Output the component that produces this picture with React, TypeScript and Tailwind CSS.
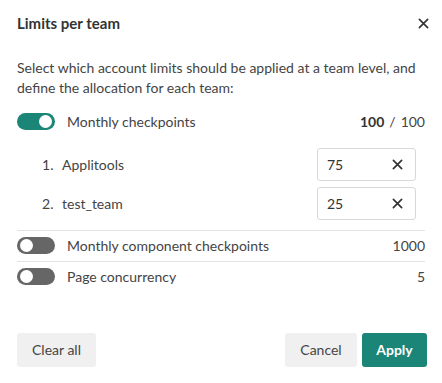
import React from 'react';

const font = { fontFamily: '"Source Sans Pro", Lato, "Open Sans", sans-serif' };

const Toggle: React.FC<{ on?: boolean }> = ({ on }) => (
  <div
    className={`relative h-[17px] w-[38px] shrink-0 rounded-full ${on ? 'bg-[#1b8578]' : 'bg-[#666666]'}`}
  >
    <div
      className={`absolute top-[2px] h-[13px] w-[13px] rounded-full bg-white ${on ? 'right-[3px]' : 'left-[3px]'}`}
    />
  </div>
);

const XIcon: React.FC<{ size?: number }> = ({ size = 12 }) => (
  <svg width={size} height={size} viewBox="0 0 12 12" fill="none">
    <path d="M1.5 1.5L10.5 10.5M10.5 1.5L1.5 10.5" stroke="#333" strokeWidth="1.8" strokeLinecap="round" />
  </svg>
);

const teams = [
  { name: 'Applitools', value: '75' },
  { name: 'test_team', value: '25' },
];

export default function App() {
  return (
    <div className="h-[383px] w-[442px] bg-white text-[14px] text-[#444]" style={font}>
      <div className="flex items-center justify-between pl-[17px] pr-[13px] pt-[12px]">
        <h2 className="font-['Lato'] text-[15px] font-bold text-[#333]">Limits per team</h2>
        <XIcon size={11} />
      </div>

      <p className="mt-[23px] px-[17px] font-['Lato'] leading-[20px]">
        Select which account limits should be applied at a team level, and define the allocation for each team:
      </p>

      <div className="mt-[15px] px-[17px] font-['Lato']">
        <div className="flex h-[18px] items-center">
          <Toggle on />
          <span className="ml-[12px] flex-1">Monthly checkpoints</span>
          <span>
            <span className="font-bold text-[#333]">100</span>
            <span className="mx-[5px]">/</span>100
          </span>
        </div>

        <div className="mt-[17px] flex flex-col gap-[6px] pl-[25px] pr-[9px]">
          {teams.map((t, i) => (
            <div key={t.name} className="flex items-center">
              <span className="w-[20px]">{i + 1}.</span>
              <span className="flex-1">{t.name}</span>
              <div className="flex h-[33px] w-[99px] items-center justify-between rounded-[3px] border border-[#d8d8d8] pl-[9px] pr-[12px]">
                <span className="text-[#333]">{t.value}</span>
                <XIcon size={11} />
              </div>
            </div>
          ))}
        </div>

        <div className="mt-[10px] border-t border-[#e4e4e4]">
          <div className="flex h-[30px] items-center">
            <Toggle />
            <span className="ml-[12px] flex-1">Monthly component checkpoints</span>
            <span>1000</span>
          </div>
        </div>
        <div className="border-t border-[#e4e4e4]">
          <div className="flex h-[30px] items-center">
            <Toggle />
            <span className="ml-[12px] flex-1">Page concurrency</span>
            <span>5</span>
          </div>
        </div>
      </div>

      <div className="mt-[41px] flex items-center pl-[17px] pr-[15px] font-['Lato']">
        <button className="h-[34px] w-[79px] rounded-[3px] bg-[#f0f0f0] text-[#444]">Clear all</button>
        <div className="flex-1" />
        <button className="h-[34px] w-[72px] rounded-[3px] bg-[#f0f0f0] text-[#444]">Cancel</button>
        <button className="ml-[5px] h-[34px] w-[65px] rounded-[3px] bg-[#1b8578] font-bold text-white">Apply</button>
      </div>
    </div>
  );
}
